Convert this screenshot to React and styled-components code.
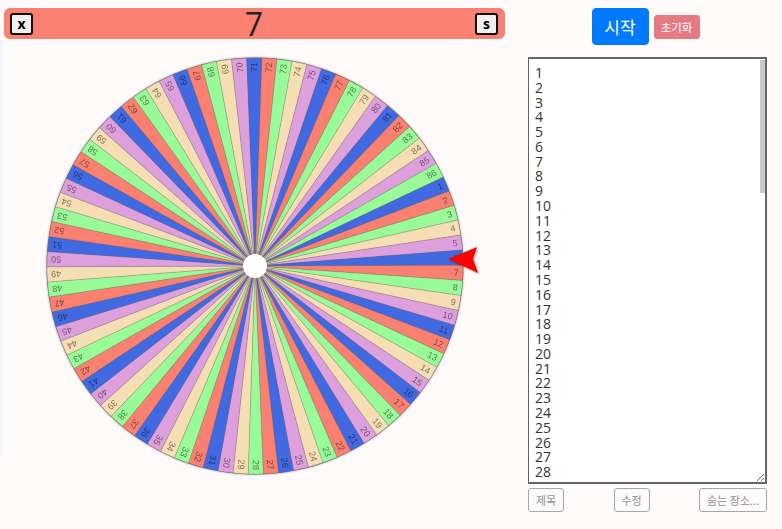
import React from "react"
import styled, { createGlobalStyle } from 'styled-components';

const COUNT = 86;
const CX = 209;
const CY = 209;
const R = 208;
const OFFSET = -0.2;
const colors = ["#dda0dd", "#4169e1", "#fa8072", "#98fb98", "#f5deb3"];

const GlobalStyle = createGlobalStyle`
  html, body {
    margin: 0;
    padding: 0;
    background: #fffafa;
    font-family: "Open Sans", "Noto Sans CJK KR", sans-serif;
  }
`;

const Page = styled.div`
  width: 782px;
  height: 529px;
  overflow: hidden;
  display: flex;
  align-items: flex-start;
  position: relative;
`;

const EdgeStrip = styled.div`
  position: absolute;
  left: 0;
  top: 40px;
  width: 2px;
  height: 415px;
  background: #f0f6ff;
`;

const LeftColumn = styled.div`
  width: 505px;
  padding: 8px 0 0 4px;
  flex-shrink: 0;
`;

const Banner = styled.div`
  width: 501px;
  height: 31px;
  box-sizing: border-box;
  background: #fa8072;
  border-radius: 6px;
  display: flex;
  align-items: center;
  justify-content: space-between;
  padding: 0 7px 0 6px;
`;

const KeyButton = styled.button`
  width: 23px;
  height: 22px;
  padding: 0;
  border: 2px solid #111;
  border-radius: 3px;
  background: #f0f0f0;
  font-family: "Open Sans", sans-serif;
  font-size: 14px;
  font-weight: 700;
  line-height: 15px;
  color: #000;
`;

const Winner = styled.div`
  font-size: 32px;
  line-height: 31px;
  color: #212529;
`;

const WheelArea = styled.div`
  position: relative;
  width: 418px;
  height: 418px;
  margin: 18px 0 0 42px;
`;

const WheelSvg = styled.svg`
  display: block;
  overflow: visible;
  filter: drop-shadow(0 0.5px 1px rgba(0, 0, 0, 0.35));
`;

const Label = styled.text`
  font-family: "Liberation Sans", Arial, sans-serif;
  font-size: 9px;
  fill: rgba(0, 0, 0, 0.5);
  dominant-baseline: central;
  text-anchor: end;
`;

const Pointer = styled.svg`
  position: absolute;
  left: 402px;
  top: 189px;
  overflow: visible;
  filter: drop-shadow(1px 1px 1px rgba(0, 0, 0, 0.35));
`;

const RightColumn = styled.div`
  width: 239px;
  margin-left: 19px;
  flex-shrink: 0;
  display: flex;
  flex-direction: column;
`;

const Controls = styled.div`
  display: flex;
  justify-content: center;
  align-items: center;
  gap: 5px;
  margin: 8px 0 0 -4px;
  height: 37px;
`;

const StartButton = styled.button`
  width: 57px;
  height: 37px;
  padding: 0;
  border: 1px solid #007bff;
  border-radius: 4px;
  background: #007bff;
  color: #fff;
  font-family: "Noto Sans CJK KR", sans-serif;
  font-size: 17px;
`;

const ResetButton = styled.button`
  width: 46px;
  height: 24px;
  padding: 0;
  border: 1px solid #e57a85;
  border-radius: 3px;
  background: #e57a85;
  color: #fff;
  font-family: "Noto Sans CJK KR", sans-serif;
  font-size: 11.5px;
`;

const ListWrap = styled.div`
  position: relative;
  margin-top: 12px;
`;

const ListBox = styled.textarea`
  display: block;
  width: 239px;
  height: 427px;
  margin: 0;
  padding: 7px 6px 0;
  box-sizing: border-box;
  border: 2px solid #666;
  border-left-width: 1px;
  outline: none;
  background: #fff;
  color: #333;
  font-family: "Open Sans", sans-serif;
  font-size: 14px;
  line-height: 14.78px;
  overflow-y: scroll;
  resize: both;
`;

// the headless browser hides native scrollbars, so the thumb is drawn over the box
const ScrollThumb = styled.div`
  position: absolute;
  top: 3px;
  right: 2px;
  width: 5px;
  height: 133px;
  background: #c9c9c9;
`;

const Footer = styled.div`
  display: flex;
  justify-content: space-between;
  margin-top: 4px;
`;

const GhostButton = styled.button`
  height: 24px;
  width: ${props => props.$w}px;
  padding: 0;
  border: 1px solid #a4a8ad;
  border-radius: 3px;
  background: transparent;
  color: #8d9297;
  font-family: "Noto Sans CJK KR", sans-serif;
  font-size: 11px;
`;

const rad = d => (d * Math.PI) / 180;

const Wheel = () => {
  const step = 360 / COUNT;
  const segments = [];
  for (let i = 0; i < COUNT; i++) {
    const n = i + 1;
    // segment 7 starts at the pointer
    const from = (n - 7) * step + OFFSET;
    const to = from + step;
    const x1 = CX + R * Math.cos(rad(from));
    const y1 = CY + R * Math.sin(rad(from));
    const x2 = CX + R * Math.cos(rad(to));
    const y2 = CY + R * Math.sin(rad(to));
    const fill = n === COUNT ? colors[3] : colors[n % 5];
    segments.push(
      <path
        key={n}
        d={`M${CX} ${CY}L${x1} ${y1}A${R} ${R} 0 0 1 ${x2} ${y2}Z`}
        fill={fill}
        stroke="rgba(90,90,90,0.45)"
        strokeWidth="0.5"
      />
    );
  }
  const labels = [];
  for (let i = 0; i < COUNT; i++) {
    const n = i + 1;
    const mid = (n - 7) * step + OFFSET + step / 2;
    labels.push(
      <Label key={n} x={R - 4} y={0} transform={`translate(${CX} ${CY}) rotate(${mid})`}>
        {n}
      </Label>
    );
  }
  return (
    <WheelSvg width="418" height="418" viewBox="0 0 418 418">
      <circle cx={CX} cy={CY} r={R + 0.5} fill="#777" />
      {segments}
      {labels}
      <circle cx={CX} cy={CY} r="12" fill="#fff" />
    </WheelSvg>
  );
};

const items = Array.from({ length: COUNT }, (_, i) => i + 1).join("\n");

const App = () => (
  <Page>
    <GlobalStyle />
    <EdgeStrip />
    <LeftColumn>
      <Banner>
        <KeyButton>x</KeyButton>
        <Winner>7</Winner>
        <KeyButton>s</KeyButton>
      </Banner>
      <WheelArea>
        <Wheel />
        <Pointer width="32" height="28" viewBox="0 0 32 28">
          <path d="M0 13 L29 1 L25 13 L30 27 Z" fill="#ff0000" />
        </Pointer>
      </WheelArea>
    </LeftColumn>
    <RightColumn>
      <Controls>
        <StartButton>시작</StartButton>
        <ResetButton>초기화</ResetButton>
      </Controls>
      <ListWrap>
        <ListBox defaultValue={items} />
        <ScrollThumb />
      </ListWrap>
      <Footer>
        <GhostButton $w={36}>제목</GhostButton>
        <GhostButton $w={36}>수정</GhostButton>
        <GhostButton $w={68}>숨는 장소...</GhostButton>
      </Footer>
    </RightColumn>
  </Page>
);

export default App;
